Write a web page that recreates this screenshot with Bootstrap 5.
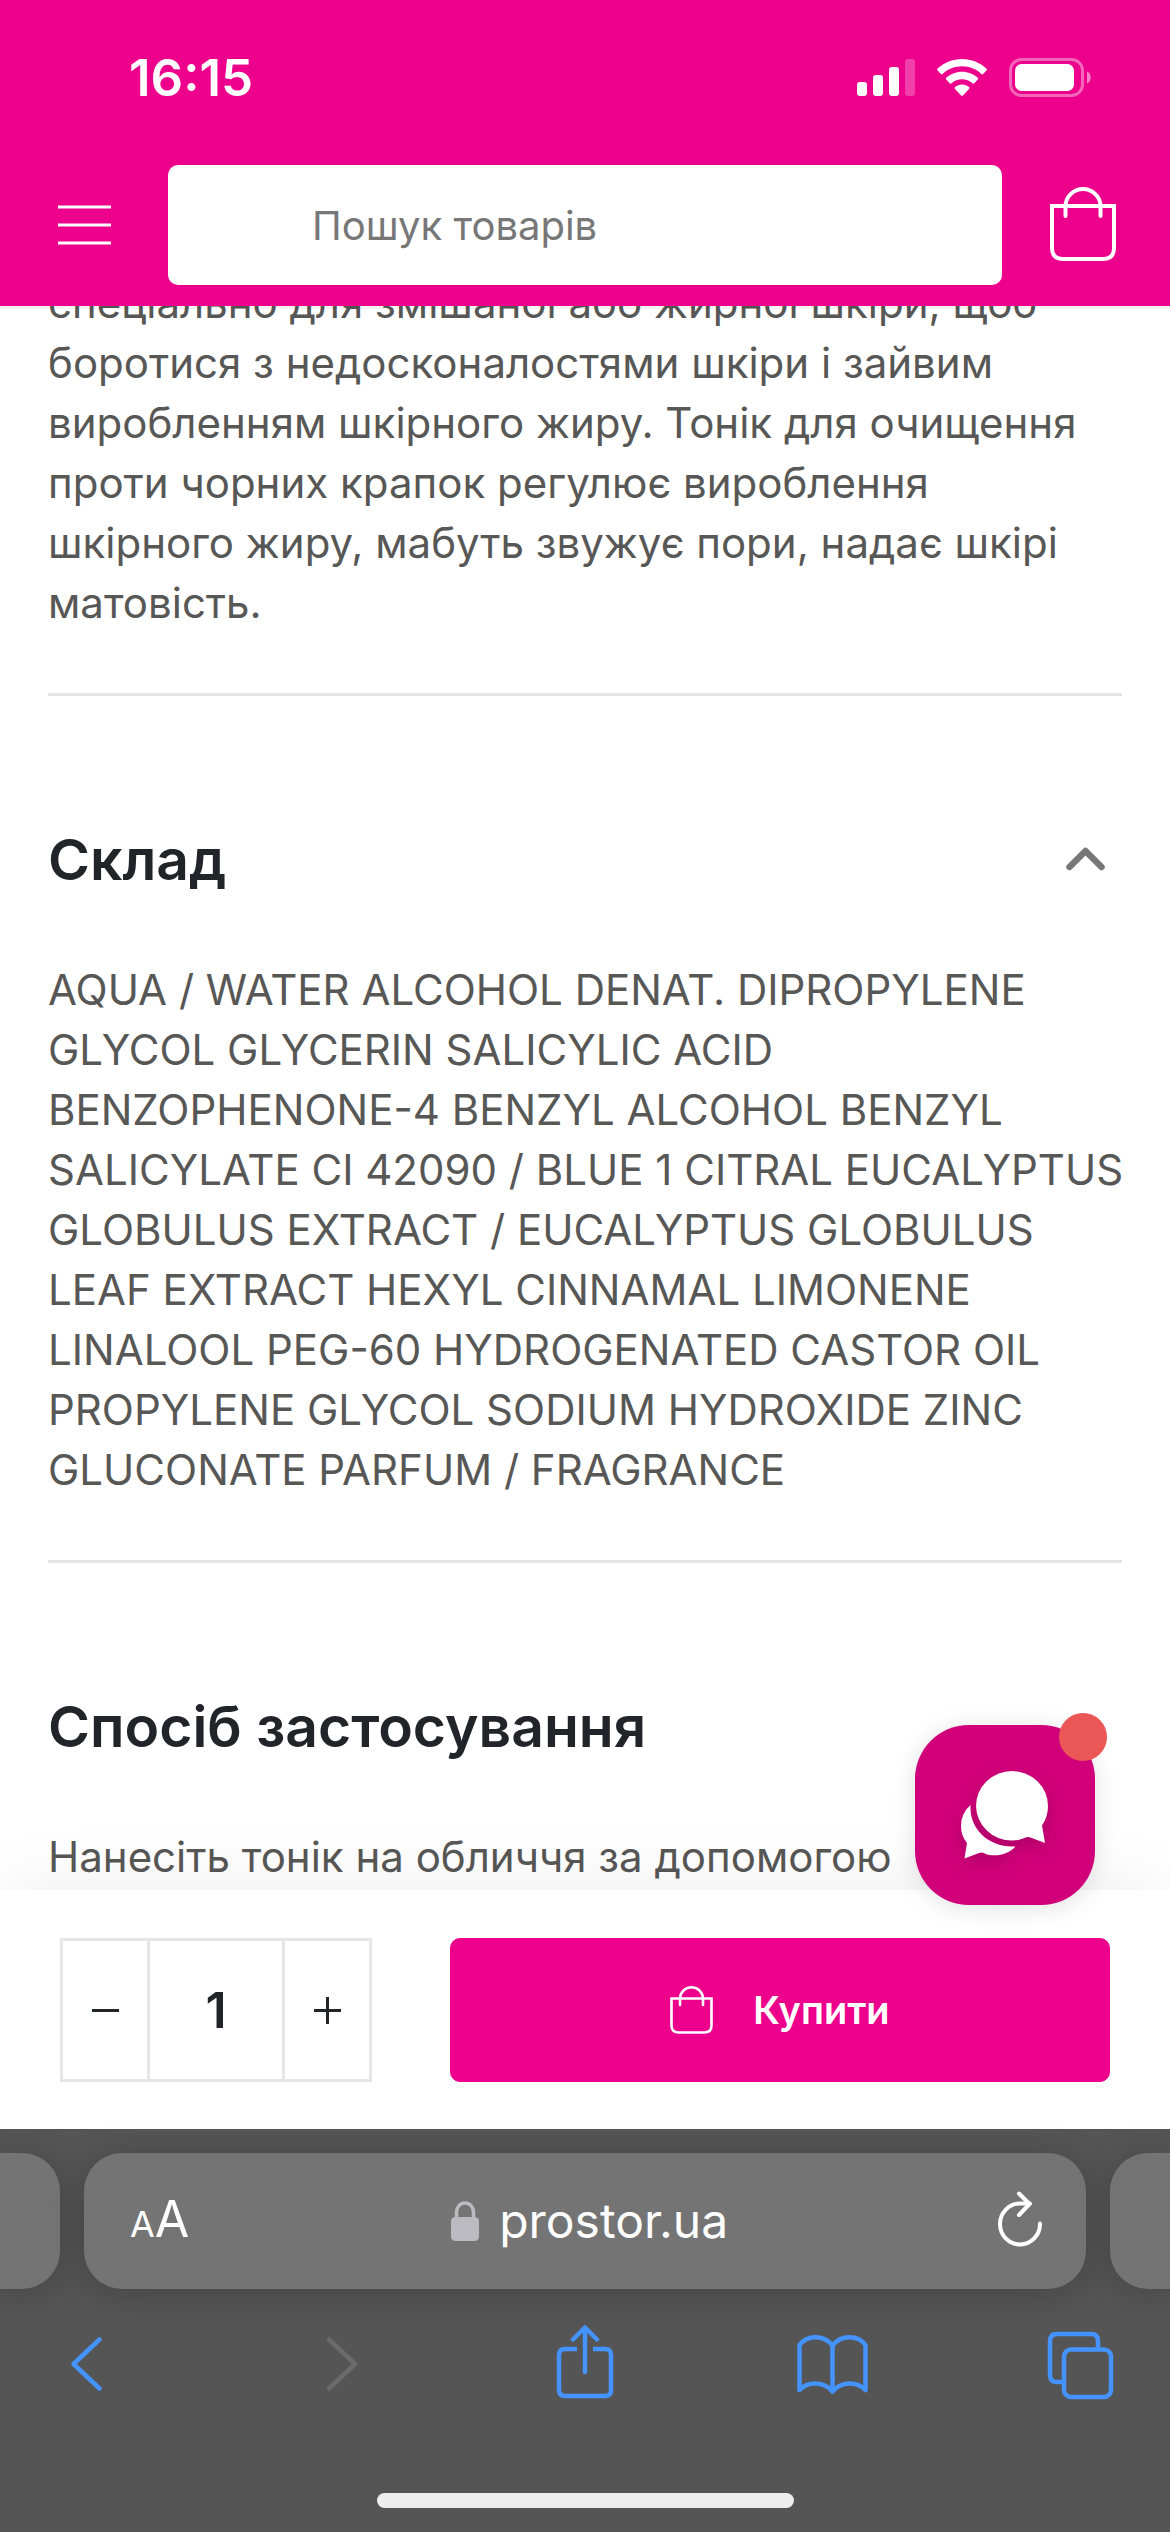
<!DOCTYPE html>
<html lang="uk">
<head>
<meta charset="utf-8">
<meta name="viewport" content="width=device-width, initial-scale=1">
<title>prostor.ua</title>
<link rel="stylesheet" href="https://cdn.jsdelivr.net/npm/bootstrap@5.3.0/dist/css/bootstrap.min.css">
<style>
  :root { --brand: #ec008c; --ink: #212529; --text: #575756; --line: #e6e6e6; --ios-blue: #4593ff; }
  body { font-family: Inter, "Noto Sans", sans-serif; color: var(--text); background: #fff; }
  svg { display: block; flex: none; }
  .plain { padding: 0; border: 0; background: none; color: inherit; }

  .top-zone { background: var(--brand); box-shadow: 0 3px 0 rgba(0,0,0,.05); z-index: 3; }
  .status-row { height: 156px; padding: 0 79px 0 129px; }
  .status-icons { gap: 22px; }
  .clock { font-size: 51px; line-height: 60px; font-weight: 600; }
  .site-row { padding: 9px 54px 21px 58px; }
  .site-search { height: 120px; border: 0; border-radius: 10px; padding: 0 24px 0 144px; margin: 0 48px 0 57px; font-size: 40px; width: auto; }
  .site-search::placeholder { color: #777; }

  .scroll-zone { min-height: 0; }
  .scrolled { margin-top: -33px; padding: 0 48px; }
  .info { border-bottom: 3px solid var(--line); padding-bottom: 60px; }
  .info + .info { padding-top: 130px; }
  .info p { font-size: 42px; line-height: 60px; white-space: nowrap; }
  .info h2 { font-size: 57px; line-height: 68px; font-weight: 600; color: var(--ink); margin-bottom: 66px; }
  .fold { padding-right: 16px; }

  .buy-bar { background: #fff; padding: 48px 60px 47px; gap: 78px; z-index: 2; box-shadow: 0 0 84px -12px rgba(30,30,50,.11); }
  .qty { height: 144px; border: 3px solid var(--line); color: var(--ink); }
  .qty .plain { width: 84px; }
  .qty input { width: 138px; border: solid var(--line); border-width: 0 3px; font-size: 50px; font-weight: 600; text-align: center; color: var(--ink); border-radius: 0; padding: 0; }
  .buy-btn { --bs-btn-bg: var(--brand); --bs-btn-border-color: var(--brand); --bs-btn-color: #fff; height: 144px; border-radius: 10px; font-size: 38px; font-weight: 600; gap: 40px; }
  .chat { position: absolute; right: 75px; top: -165px; width: 180px; height: 180px; border-radius: 54px; background: #d1007a; box-shadow: 0 3px 24px rgba(0,0,0,.12); }
  .chat svg { filter: drop-shadow(0 6px 8px rgba(80,0,50,.28)); }
  .chat-dot { position: absolute; top: -12px; right: -12px; width: 48px; height: 48px; background: #eb5757; }

  .safari { background: #555; z-index: 2; padding-top: 24px; }
  .tab-strip { gap: 24px; }
  .tab-pill { height: 136px; border-radius: 38px; background: #747474; box-shadow: 0 4px 36px rgba(0,0,0,.2); color: #fff; }
  .tab-edge { width: 60px; flex: none; }
  .tab-edge.before { border-radius: 0 38px 38px 0; }
  .tab-edge.after { border-radius: 38px 0 0 38px; }
  .tab-now { padding: 0 44px 0 46px; }
  .aa { font-size: 50px; line-height: 60px; }
  .aa span { font-size: 36px; }
  .host { font-size: 48px; line-height: 60px; color: #fff; gap: 20px; }
  .tools { padding: 35px 50px 0 46px; color: var(--ios-blue); }
  .home-line { width: 417px; height: 15px; background: #eee; margin: 89px auto 24px; }
</style>
<script src="https://cdn.jsdelivr.net/npm/bootstrap@5.3.0/dist/js/bootstrap.bundle.min.js"></script>
</head>
<body class="d-flex flex-column vh-100 overflow-hidden">

<header class="top-zone position-relative text-white flex-shrink-0">
  <div class="status-row d-flex align-items-center justify-content-between">
    <span class="clock">16:15</span>
    <div class="status-icons d-flex align-items-center">
      <svg width="58" height="38" viewBox="0 0 58 38" fill="#fff" aria-hidden="true"><rect y="23" width="10" height="14" rx="3"/><rect x="16" y="16" width="10" height="21" rx="3"/><rect x="32" y="8" width="10" height="29" rx="3"/><rect x="48" width="10" height="37" rx="3" opacity=".25"/></svg>
      <svg width="50" height="38" viewBox="0 0 50 38" fill="#fff" aria-hidden="true"><path d="M25 0C15.500 0 7 3.600.6 9.600q-.9.9 0 1.800l3.300 3.500q.9.800 1.800 0C11 10 17.700 7.300 25 7.300s14 2.700 19.300 7.600q.9.800 1.800 0l3.300-3.500q.9-.9 0-1.800C43 3.600 34.500 0 25 0Z"/><path d="M25 12.700c-6.100 0-11.600 2.300-15.800 6.100q-.9.900 0 1.800l3.500 3.600q.9.800 1.800.1c2.900-2.600 6.500-4.100 10.500-4.100s7.600 1.500 10.500 4.100q.9.700 1.800-.1l3.500-3.600q.9-.9 0-1.800c-4.200-3.800-9.700-6.100-15.800-6.100Z"/><path d="M25 25.600c-2.700 0-5.100.9-7 2.500q-.9.900 0 1.800l6.100 6.600q.9.800 1.800 0l6.100-6.600q.9-.9 0-1.800c-1.900-1.600-4.300-2.500-7-2.500Z"/></svg>
      <svg width="82" height="40" viewBox="0 0 82 40" fill="#fff" aria-hidden="true"><rect x="1.500" y="1.500" width="72" height="36" rx="11" fill="none" stroke="#fff" stroke-width="3" opacity=".4"/><rect x="6" y="6" width="59" height="27" rx="6.500"/><path d="M78 13.500c5 2 5 10 0 12Z" opacity=".5"/></svg>
    </div>
  </div>
  <div class="site-row d-flex align-items-center">
    <button type="button" class="plain" aria-label="Меню"><svg width="53" height="40" viewBox="0 0 53 40" stroke="#fff" stroke-width="3"><path d="M0 2h53M0 20h53M0 38h53"/></svg></button>
    <input type="search" class="site-search form-control flex-grow-1" placeholder="Пошук товарів" aria-label="Пошук товарів">
    <button type="button" class="plain" aria-label="Кошик"><svg width="66" height="76" viewBox="0 0 66 76" fill="none" stroke="#fff" stroke-width="4"><path d="M2 19h62v42q0 11-11 11H13Q2 72 2 61Z"/><path d="M15.500 29V19.500a17.500 17.500 0 0 1 35 0V29" stroke-linecap="round"/></svg></button>
  </div>
</header>

<main class="scroll-zone flex-grow-1 overflow-hidden">
  <div class="scrolled">
    <section class="info">
      <p class="mb-0">спеціально для змішаної або жирної шкіри, щоб<br>боротися з недосконалостями шкіри і зайвим<br>виробленням шкірного жиру. Тонік для очищення<br>проти чорних крапок регулює вироблення<br>шкірного жиру, мабуть звужує пори, надає шкірі<br>матовість.</p>
    </section>
    <section class="info">
      <div class="d-flex justify-content-between align-items-start">
        <h2>Склад</h2>
        <button type="button" class="plain fold" aria-label="Згорнути"><svg width="41" height="66" viewBox="0 0 41 66" fill="none" stroke="#777" stroke-width="6.500" stroke-linecap="round" stroke-linejoin="round"><path d="M4.500 41 20.500 25l16 16"/></svg></button>
      </div>
      <p class="mb-0">AQUA / WATER ALCOHOL DENAT. DIPROPYLENE<br>GLYCOL GLYCERIN SALICYLIC ACID<br>BENZOPHENONE-4 BENZYL ALCOHOL BENZYL<br>SALICYLATE CI 42090 / BLUE 1 CITRAL EUCALYPTUS<br>GLOBULUS EXTRACT / EUCALYPTUS GLOBULUS<br>LEAF EXTRACT HEXYL CINNAMAL LIMONENE<br>LINALOOL PEG-60 HYDROGENATED CASTOR OIL<br>PROPYLENE GLYCOL SODIUM HYDROXIDE ZINC<br>GLUCONATE PARFUM / FRAGRANCE</p>
    </section>
    <section class="info">
      <h2>Спосіб застосування</h2>
      <p class="mb-0">Нанесіть тонік на обличчя за допомогою</p>
    </section>
  </div>
</main>

<div class="buy-bar position-relative d-flex flex-shrink-0">
  <div class="qty d-flex">
    <button type="button" class="plain d-flex align-items-center justify-content-center" aria-label="Менше"><svg width="27" height="27" viewBox="0 0 27 27" stroke="currentColor" stroke-width="3"><path d="M0 13.500h27"/></svg></button>
    <input type="text" inputmode="numeric" value="1" aria-label="Кількість">
    <button type="button" class="plain d-flex align-items-center justify-content-center" aria-label="Більше"><svg width="27" height="27" viewBox="0 0 27 27" stroke="currentColor" stroke-width="3"><path d="M0 13.500h27M13.500 0v27"/></svg></button>
  </div>
  <button type="button" class="btn buy-btn flex-grow-1 d-flex align-items-center justify-content-center">
    <svg width="43" height="48" viewBox="0 0 43 48" fill="none" stroke="#fff" stroke-width="2.600" aria-hidden="true"><path d="M1.500 12.500h40v27q0 7-7 7h-26q-7 0-7-7Z"/><path d="M10 19v-6.200a11.500 11.500 0 0 1 23 0V19" stroke-linecap="round"/></svg>
    Купити
  </button>
  <button type="button" class="plain chat" aria-label="Чат">
    <svg class="mx-auto" width="88" height="88" viewBox="0 0 88 88" fill="#fff"><path d="M51 0a36 35 0 0 1 36 35q0 11-6 19.500L84 72l-14.500-5.500q-3-1-6 .5-6 2.500-12.500 2.500A36 35 0 0 1 15 35 36 35 0 0 1 51 0Z"/><path d="M9.500 34C8 58 28 77 54.500 75.500 48 83 37 86 26 83.500q-5-3-8-1.500L3.500 87.500 6 72Q0 65 0 55q0-13 9.500-21Z"/></svg>
    <span class="chat-dot rounded-circle"></span>
  </button>
</div>

<footer class="safari position-relative flex-shrink-0">
  <div class="tab-strip d-flex">
    <div class="tab-pill tab-edge before"></div>
    <div class="tab-pill tab-now flex-grow-1 d-flex align-items-center justify-content-between">
      <button type="button" class="plain aa" aria-label="Параметри сторінки"><span>A</span>A</button>
      <a href="#" class="host me-2 d-flex align-items-center text-decoration-none"><svg width="28" height="40" viewBox="0 0 28 40" aria-hidden="true"><rect y="16" width="28" height="24" rx="4.500" fill="#bbbac1"/><path d="M5.500 18v-7a8.500 9 0 0 1 17 0v7" fill="none" stroke="#bbbac1" stroke-width="3.500"/></svg>prostor.ua</a>
      <button type="button" class="plain" aria-label="Оновити"><svg width="44" height="60" viewBox="0 0 44 60" fill="none" stroke="#fff" stroke-width="4" stroke-linecap="round" stroke-linejoin="round"><path d="M42 32.500A20 20.500 0 1 1 22 12.500h10"/><path d="M21 2.500 31.500 13 21 24"/></svg></button>
    </div>
    <div class="tab-pill tab-edge after"></div>
  </div>
  <nav class="tools d-flex justify-content-between" aria-label="Safari">
    <button type="button" class="plain" aria-label="Назад"><svg width="80" height="80" viewBox="0 0 80 80" fill="none" stroke="currentColor" stroke-width="4.500" stroke-linecap="round" stroke-linejoin="round"><path d="M53.500 15.500 27.500 40l26 24.500"/></svg></button>
    <button type="button" class="plain" aria-label="Вперед" disabled><svg width="80" height="80" viewBox="0 0 80 80" fill="none" stroke="#6b6b6b" stroke-width="4.500" stroke-linecap="round" stroke-linejoin="round"><path d="M34 15.500 60 40 34 64.500"/></svg></button>
    <button type="button" class="plain" aria-label="Поділитися"><svg width="80" height="80" viewBox="0 0 80 80" fill="none" stroke="currentColor" stroke-width="4.500" stroke-linejoin="round"><path d="M34 25H22q-6 0-6 6v35q0 6 6 6h40q6 0 6-6V31q0-6-6-6H50"/><path d="M42 48V4M30 15.500 42 3.500l12 12" stroke-linecap="round"/></svg></button>
    <button type="button" class="plain" aria-label="Закладки"><svg width="80" height="80" viewBox="0 0 80 80" fill="none" stroke="currentColor" stroke-width="4.500" stroke-linecap="round" stroke-linejoin="round"><path d="M40.500 21.500C32 10.500 15 10.500 7.500 21v45C16 57 32 57 40.500 67.500 49 57 65 57 73.500 66V21C66 10.500 49 10.500 40.500 21.500Zm0 0v46"/></svg></button>
    <button type="button" class="plain" aria-label="Вкладки"><svg width="80" height="80" viewBox="0 0 80 80" fill="none" stroke="currentColor" stroke-width="4.500"><rect x="24" y="25.500" width="47" height="47.500" rx="7"/><path d="M24 58h-7q-7 0-7-7V17q0-7 7-7h34q7 0 7 7v8"/></svg></button>
  </nav>
  <div class="home-line rounded-pill"></div>
</footer>
</body>
</html>
